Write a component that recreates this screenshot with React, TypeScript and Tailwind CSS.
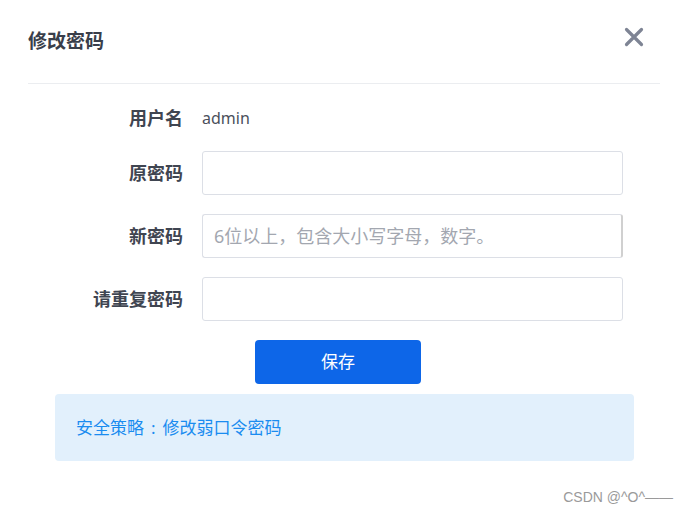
import React from 'react';

const font = { fontFamily: '"Noto Sans", "Noto Sans CJK SC", sans-serif' };

function Field({ label, children }: { label: string; children: React.ReactNode }) {
  return (
    <div className="flex items-center">
      <div className="w-[183px] text-right text-[18px] leading-[26px] font-bold text-[#3f4551] shrink-0">{label}</div>
      <div className="ml-[19px]">{children}</div>
    </div>
  );
}

function Input({ placeholder, edge }: { placeholder?: string; edge?: boolean }) {
  return (
    <input
      type="password"
      placeholder={placeholder}
      className={`w-[421px] h-[44px] rounded-[3px] border border-[#dcdfe6] px-[11px] text-[18px] text-[#444] outline-none placeholder:text-[#a3a7b0] ${
        edge ? 'border-r-2 border-r-[#d0d0d0]' : ''
      }`}
    />
  );
}

export default function App() {
  return (
    <div className="w-[686px] h-[515px] bg-white flex flex-col" style={font}>
      <div className="ml-[28px] mr-[26px] h-[84px] border-b border-[#ebedf0] flex justify-between items-start pt-[28px]">
        <h2 className="text-[19px] leading-[26px] font-bold text-[#393e4a]">修改密码</h2>
        <button className="mt-[-2px] mr-[15px] text-[#7e8494]">
          <svg width="22" height="22" viewBox="0 0 22 22" fill="none">
            <path d="M3.5 3.5L18.5 18.5M18.5 3.5L3.5 18.5" stroke="currentColor" strokeWidth="3.2" strokeLinecap="round" />
          </svg>
        </button>
      </div>

      <div className="flex flex-col mt-[21px]">
        <Field label="用户名">
          <span className="text-[16px] leading-[26px] text-[#4b505c]">admin</span>
        </Field>
        <div className="mt-[20px] flex flex-col gap-[19px]">
          <Field label="原密码">
            <Input />
          </Field>
          <Field label="新密码">
            <Input placeholder="6位以上，包含大小写字母，数字。" edge />
          </Field>
          <Field label="请重复密码">
            <Input />
          </Field>
        </div>
        <button className="mt-[19px] ml-[255px] w-[166px] h-[44px] rounded-[4px] bg-[#0d66e8] text-white text-[17px]">
          保存
        </button>
        <div className="mt-[10px] ml-[55px] w-[579px] h-[67px] rounded-[4px] bg-[#e2f0fc] flex items-center pl-[21px] text-[17px] text-[#1a8cf0]">
          安全策略<span className="mx-[7px]">:</span>修改弱口令密码
        </div>
      </div>

      <div className="mt-auto mb-[7px] mr-[13px] self-end text-[14px] text-[#9a9a9a]" style={{ fontFamily: '"Liberation Sans", Arial, sans-serif' }}>
        CSDN @^O^——
      </div>
    </div>
  );
}
